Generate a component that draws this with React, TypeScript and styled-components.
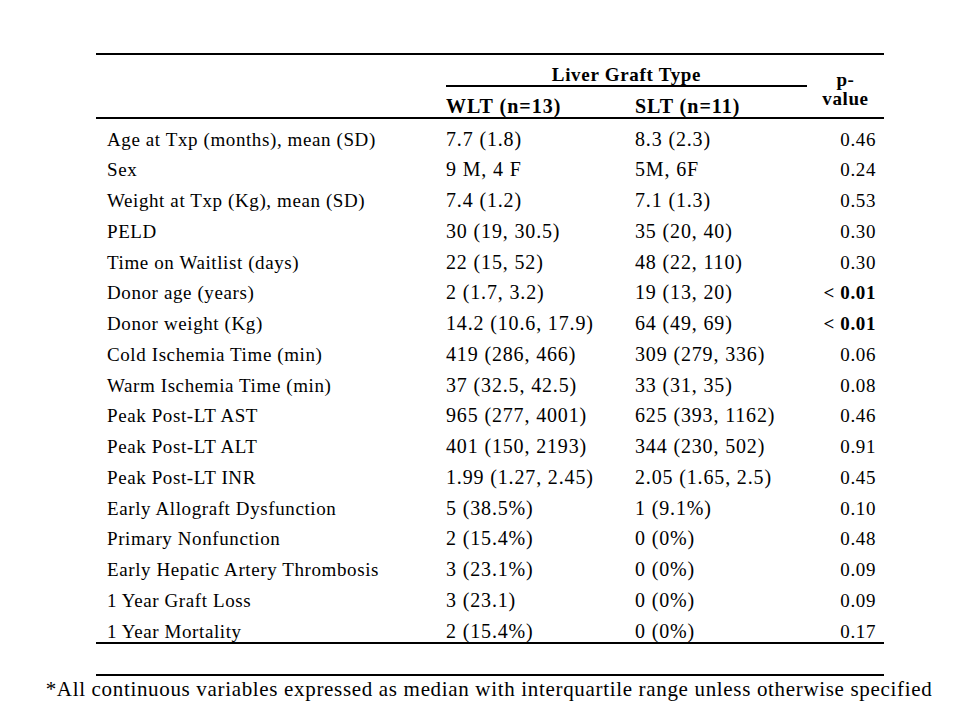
import React from "react";
import styled, { createGlobalStyle } from "styled-components";

const GlobalStyle = createGlobalStyle`
  html, body {
    margin: 0;
    padding: 0;
    background: #ffffff;
  }
  body {
    font-family: "Liberation Serif", "Times New Roman", serif;
    color: #000;
  }
`;

const Page = styled.div`
  width: 978px;
  height: 726px;
  padding-top: 53px;
  box-sizing: border-box;
  display: flex;
  flex-direction: column;
  align-items: center;
  font-size: 19px;
  letter-spacing: 0.6px;
`;

const TableBlock = styled.div`
  width: 788px;
  margin-left: 2px;
  display: flex;
  flex-direction: column;
`;

const Table = styled.table`
  width: 788px;
  border-collapse: separate;
  border-spacing: 0;
  table-layout: fixed;
  border-top: 2px solid #000;
`;

const HeadCell = styled.th<{ $align?: string; $wide?: boolean }>`
  font-weight: bold;
  font-size: ${(p) => (p.$wide ? "20px" : "19px")};
  letter-spacing: ${(p) => (p.$wide ? "1px" : "0.7px")};
  text-align: ${(p) => p.$align || "left"};
  vertical-align: top;
  height: 32px;
  box-sizing: border-box;
  padding: 9px 0 0 0;
  line-height: 21px;
  white-space: nowrap;
  border-bottom: 2px solid #000;
`;

const PHead = styled.th`
  font-weight: bold;
  text-align: center;
  vertical-align: top;
  padding: 15px 0 0 0;
  line-height: 19px;
  border-bottom: 2px solid #000;
`;

const Cell = styled.td<{
  $align?: string;
  $bold?: boolean;
  $first?: boolean;
  $last?: boolean;
  $num?: boolean;
}>`
  height: 30.75px;
  box-sizing: border-box;
  padding: 9.5px ${(p) => (p.$align === "right" ? "8px" : "0")} 0
    ${(p) => (p.$first ? "11px" : "0")};
  line-height: 21px;
  vertical-align: top;
  font-size: ${(p) => (p.$num ? "20px" : "19px")};
  letter-spacing: ${(p) => (p.$num ? "0.85px" : "0.6px")};
  text-align: ${(p) => p.$align || "left"};
  font-weight: ${(p) => (p.$bold ? "bold" : "normal")};
  white-space: nowrap;
  border-bottom: ${(p) => (p.$last ? "2px solid #000" : "none")};
`;

const FootRule = styled.div`
  width: 788px;
  margin-top: 30px;
  border-top: 2px solid #000;
`;

const Footnote = styled.p`
  margin: 1px 0 0;
  font-size: 21px;
  letter-spacing: 0.67px;
  line-height: 24px;
  white-space: nowrap;
  text-align: center;
`;

type Row = { label: string; wlt: string; slt: string; p: string; sig?: boolean };

const rows: Row[] = [
  { label: "Age at Txp (months), mean (SD)", wlt: "7.7 (1.8)", slt: "8.3 (2.3)", p: "0.46" },
  { label: "Sex", wlt: "9 M, 4 F", slt: "5M, 6F", p: "0.24" },
  { label: "Weight at Txp (Kg), mean (SD)", wlt: "7.4 (1.2)", slt: "7.1 (1.3)", p: "0.53" },
  { label: "PELD", wlt: "30 (19, 30.5)", slt: "35 (20, 40)", p: "0.30" },
  { label: "Time on Waitlist (days)", wlt: "22 (15, 52)", slt: "48 (22, 110)", p: "0.30" },
  { label: "Donor age (years)", wlt: "2 (1.7, 3.2)", slt: "19 (13, 20)", p: "< 0.01", sig: true },
  { label: "Donor weight (Kg)", wlt: "14.2 (10.6, 17.9)", slt: "64 (49, 69)", p: "< 0.01", sig: true },
  { label: "Cold Ischemia Time (min)", wlt: "419 (286, 466)", slt: "309 (279, 336)", p: "0.06" },
  { label: "Warm Ischemia Time (min)", wlt: "37 (32.5, 42.5)", slt: "33 (31, 35)", p: "0.08" },
  { label: "Peak Post-LT AST", wlt: "965 (277, 4001)", slt: "625 (393, 1162)", p: "0.46" },
  { label: "Peak Post-LT ALT", wlt: "401 (150, 2193)", slt: "344 (230, 502)", p: "0.91" },
  { label: "Peak Post-LT INR", wlt: "1.99 (1.27, 2.45)", slt: "2.05 (1.65, 2.5)", p: "0.45" },
  { label: "Early Allograft Dysfunction", wlt: "5 (38.5%)", slt: "1 (9.1%)", p: "0.10" },
  { label: "Primary Nonfunction", wlt: "2 (15.4%)", slt: "0 (0%)", p: "0.48" },
  { label: "Early Hepatic Artery Thrombosis", wlt: "3 (23.1%)", slt: "0 (0%)", p: "0.09" },
  { label: "1 Year Graft Loss", wlt: "3 (23.1)", slt: "0 (0%)", p: "0.09" },
  { label: "1 Year Mortality", wlt: "2 (15.4%)", slt: "0 (0%)", p: "0.17" },
];

export default function App() {
  return (
    <>
      <GlobalStyle />
      <Page>
        <TableBlock>
          <Table>
            <colgroup>
              <col style={{ width: 350 }} />
              <col style={{ width: 189 }} />
              <col style={{ width: 172 }} />
              <col style={{ width: 77 }} />
            </colgroup>
            <thead>
              <tr>
                <PHead rowSpan={2} />
                <HeadCell colSpan={2} $align="center">
                  Liver Graft Type
                </HeadCell>
                <PHead rowSpan={2}>
                  p-
                  <br />
                  value
                </PHead>
              </tr>
              <tr>
                <HeadCell $wide>WLT (n=13)</HeadCell>
                <HeadCell $wide>SLT (n=11)</HeadCell>
              </tr>
            </thead>
            <tbody>
              {rows.map((r, i) => {
                const last = i === rows.length - 1;
                return (
                  <tr key={r.label}>
                    <Cell $first $last={last}>{r.label}</Cell>
                    <Cell $num $last={last}>{r.wlt}</Cell>
                    <Cell $num $last={last}>{r.slt}</Cell>
                    <Cell $align="right" $bold={r.sig} $last={last}>
                      {r.p}
                    </Cell>
                  </tr>
                );
              })}
            </tbody>
          </Table>
          <FootRule />
        </TableBlock>
        <Footnote>
          *All continuous variables expressed as median with interquartile range unless otherwise specified
        </Footnote>
      </Page>
    </>
  );
}
